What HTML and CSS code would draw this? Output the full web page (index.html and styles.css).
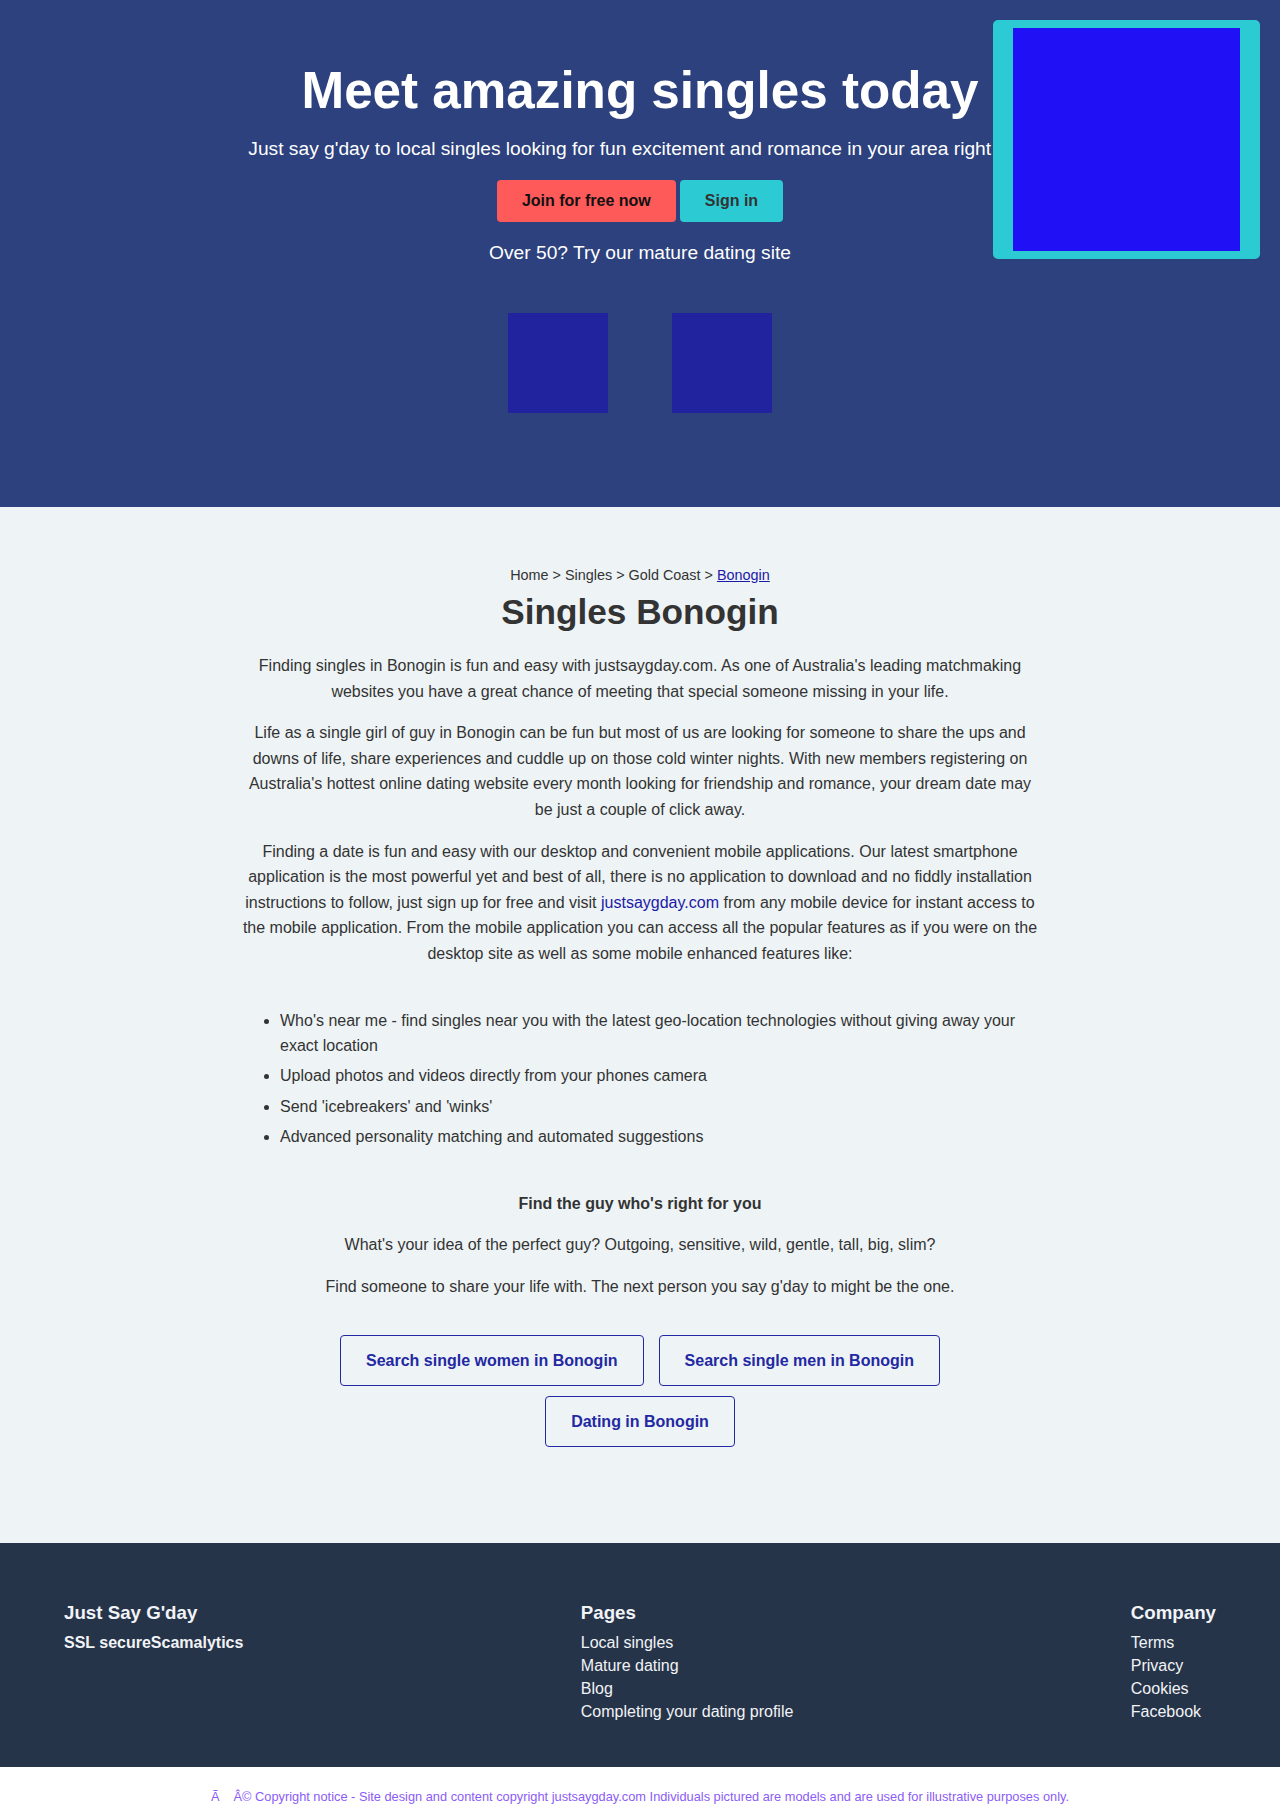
FILE: index.html
```html
<!DOCTYPE html>
<html lang="en">
<head>
<meta charset="utf-8">
<title>Singles Bonogin</title>
<link rel="stylesheet" href="styles.css">
</head>
<body>
<section class="hero">
  <div class="hero-inner">
    <h1 class="hero-title">Meet amazing singles today</h1>
    <p class="hero-sub">Just say g'day to local singles looking for fun excitement and romance in your area right now</p>
    <div class="hero-actions">
      <a class="btn btn-join" href="#">Join for free now</a>
      <a class="btn btn-signin" href="#">Sign in</a>
    </div>
    <p class="hero-mature">Over 50? Try our mature dating site</p>
    <div class="hero-badges">
      <div class="badge"></div>
      <div class="badge"></div>
    </div>
  </div>
  <div class="hero-photo"><div class="hero-photo-img"></div></div>
</section>

<main class="content">
  <div class="content-inner">
    <nav class="crumbs">Home &gt; Singles &gt; Gold Coast &gt; <a href="#">Bonogin</a></nav>
    <h1 class="page-title">Singles Bonogin</h1>
    <p class="para">Finding singles in Bonogin is fun and easy with justsaygday.com. As one of Australia's leading matchmaking websites you have a great chance of meeting that special someone missing in your life.</p>
    <p class="para">Life as a single girl of guy in Bonogin can be fun but most of us are looking for someone to share the ups and downs of life, share experiences and cuddle up on those cold winter nights. With new members registering on Australia's hottest online dating website every month looking for friendship and romance, your dream date may be just a couple of click away.</p>
    <p class="para">Finding a date is fun and easy with our desktop and convenient mobile applications. Our latest smartphone application is the most powerful yet and best of all, there is no application to download and no fiddly installation instructions to follow, just sign up for free and visit <a class="inline-link" href="#">justsaygday.com</a> from any mobile device for instant access to the mobile application. From the mobile application you can access all the popular features as if you were on the desktop site as well as some mobile enhanced features like:</p>
    <ul class="features">
      <li>Who's near me - find singles near you with the latest geo-location technologies without giving away your exact location</li>
      <li>Upload photos and videos directly from your phones camera</li>
      <li>Send 'icebreakers' and 'winks'</li>
      <li>Advanced personality matching and automated suggestions</li>
    </ul>
    <p class="para para-strong">Find the guy who's right for you</p>
    <p class="para">What's your idea of the perfect guy? Outgoing, sensitive, wild, gentle, tall, big, slim?</p>
    <p class="para">Find someone to share your life with. The next person you say g'day to might be the one.</p>
    <div class="search-links">
      <a class="outline-btn" href="#">Search single women in Bonogin</a>
      <a class="outline-btn" href="#">Search single men in Bonogin</a>
      <a class="outline-btn" href="#">Dating in Bonogin</a>
    </div>
  </div>
</main>

<footer class="footer">
  <div class="footer-col">
    <h3 class="footer-heading">Just Say G'day</h3>
    <div class="footer-list footer-bold">SSL secureScamalytics</div>
  </div>
  <div class="footer-col">
    <h3 class="footer-heading">Pages</h3>
    <div class="footer-list">
      <a href="#">Local singles</a>
      <a href="#">Mature dating</a>
      <a href="#">Blog</a>
      <a href="#">Completing your dating profile</a>
    </div>
  </div>
  <div class="footer-col">
    <h3 class="footer-heading">Company</h3>
    <div class="footer-list">
      <a href="#">Terms</a>
      <a href="#">Privacy</a>
      <a href="#">Cookies</a>
      <a href="#">Facebook</a>
    </div>
  </div>
</footer>

<div class="copyright">Ã<span class="gap"></span>Â© Copyright notice - Site design and content copyright justsaygday.com Individuals pictured are models and are used for illustrative purposes only.</div>
</body>
</html>
```

FILE: styles.css
```css
* { box-sizing: border-box; }

html, body {
  margin: 0;
  padding: 0;
}

body {
  font-family: "Liberation Sans", Arial, sans-serif;
  color: #333333;
  background: #ffffff;
}

a { text-decoration: none; }

/* HERO */
.hero {
  position: relative;
  background: #2c417d;
  padding: 61px 0 94px;
  color: #ffffff;
}

.hero-inner {
  display: flex;
  flex-direction: column;
  align-items: center;
  text-align: center;
}

.hero-title {
  margin: 0;
  font-size: 51.2px;
  line-height: 59px;
  font-weight: 700;
  color: #ffffff;
}

.hero-sub {
  margin: 17px 0 0;
  font-size: 19.2px;
  line-height: 23px;
  white-space: nowrap;
}

.hero-actions {
  margin-top: 20px;
  display: flex;
  gap: 4px;
}

.btn {
  display: block;
  padding: 12px 25px;
  font-size: 16px;
  line-height: 18px;
  font-weight: 700;
  border-radius: 4px;
}

.btn-join {
  background: #ff5a5a;
  color: #111111;
}

.btn-signin {
  background: #2ccad3;
  color: #333333;
}

.hero-mature {
  margin: 19px 0 0;
  font-size: 19.2px;
  line-height: 23px;
}

.hero-badges {
  margin-top: 49px;
  display: flex;
  gap: 64px;
}

.badge {
  width: 100px;
  height: 100px;
  background: #20239d;
}

.hero-photo {
  position: absolute;
  top: 20px;
  right: 20px;
  width: 267px;
  height: 239px;
  padding: 8px 20px;
  background: #2ccad3;
  border-radius: 5px;
}

.hero-photo-img {
  width: 100%;
  height: 100%;
  background: #1f10f6;
}

/* CONTENT */
.content {
  background: #eef3f6;
  padding: 60px 0 96px;
}

.content-inner {
  width: 800px;
  margin: 0 auto;
  text-align: center;
}

.crumbs {
  font-size: 14.4px;
  line-height: 17px;
  color: #333333;
}

.crumbs a {
  color: #1a1aa6;
  text-decoration: underline;
}

.page-title {
  margin: 8px 0 21px;
  font-size: 35.2px;
  line-height: 40px;
  font-weight: 700;
  color: #333333;
}

.para {
  margin: 16px 0;
  font-size: 16px;
  line-height: 25.6px;
}

.para-strong {
  font-weight: 700;
}

.inline-link {
  color: #1a1aa6;
}

.features {
  margin: 41px 0;
  padding-left: 40px;
  text-align: left;
  font-size: 16px;
  line-height: 25.6px;
}

.features li {
  margin-bottom: 4.7px;
}

.search-links {
  margin-top: 36px;
  display: flex;
  flex-wrap: wrap;
  justify-content: center;
  column-gap: 15px;
  row-gap: 10px;
}

.outline-btn {
  display: block;
  padding: 12px 25px;
  border: 1px solid #2328a3;
  border-radius: 4px;
  font-size: 16px;
  line-height: 25px;
  font-weight: 700;
  color: #2328a3;
}

/* FOOTER */
.footer {
  background: #263449;
  color: #f1f3f6;
  padding: 59px 64px 43px;
  display: flex;
  justify-content: space-between;
  align-items: flex-start;
}

.footer-heading {
  margin: 0 0 7px;
  font-size: 18.72px;
  line-height: 21.5px;
  font-weight: 700;
}

.footer-list {
  display: flex;
  flex-direction: column;
  font-size: 16px;
  line-height: 23.2px;
}

.footer-list a {
  color: #f1f3f6;
}

.footer-bold {
  font-weight: 700;
}

/* COPYRIGHT */
.copyright {
  padding: 22px 0 10px;
  text-align: center;
  font-size: 12.8px;
  line-height: 15px;
  color: #8b5cf6;
}

.gap {
  display: inline-block;
  width: 14px;
}
```
